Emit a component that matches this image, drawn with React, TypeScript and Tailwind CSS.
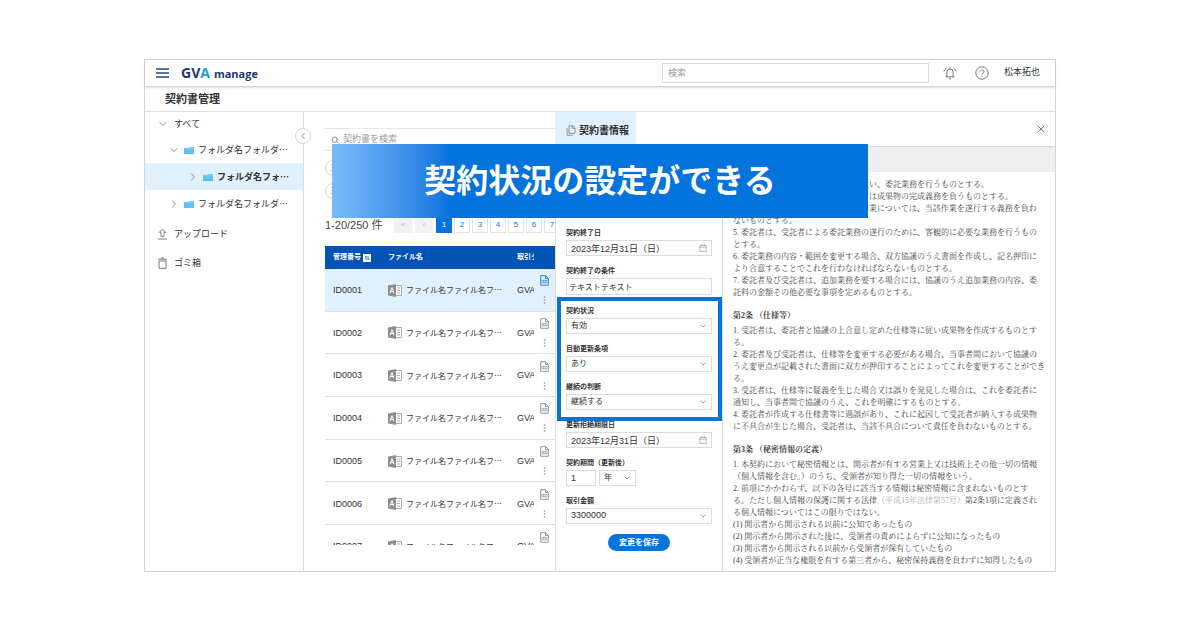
import { ReactNode } from 'react';
import { ChevronDown, ChevronLeft, ChevronRight, Search, X } from 'lucide-react';

const FOLDERS = [
  { name: 'フォルダ名フォルダ…', indent: 'pl-[23px]', open: true, active: false },
  { name: 'フォルダ名フォ…', indent: 'pl-[42px]', open: false, active: true },
  { name: 'フォルダ名フォルダ…', indent: 'pl-[23px]', open: false, active: false },
];

const FILES = ['ID0001', 'ID0002', 'ID0003', 'ID0004', 'ID0005', 'ID0006', 'ID0007'];

const PAGES = [1, 2, 3, 4, 5, 6, 7];

const MenuIcon = () => (
  <svg viewBox="0 0 13 10" className="h-2.5 w-[13px]" fill="none" stroke="#24477d" strokeWidth="1.4">
    <path d="M0 1h13M0 5h13M0 9h13" />
  </svg>
);

const FolderIcon = () => (
  <svg viewBox="0 0 10 8" className="h-2 w-2.5 flex-none" fill="#7accf9">
    <path d="M0 1.800h4.500l1-.8H10V8H0z" />
    <path d="M0 3h10v5H0z" fill="#62c0f6" />
  </svg>
);

const UploadIcon = () => (
  <svg viewBox="0 0 11 12" className="h-3 w-[11px] flex-none" fill="none" stroke="#777" strokeWidth="0.9">
    <path d="M5.5 1 8.7 4.4H7v4.2H4V4.4H2.3z" />
    <path d="M1 11h9" />
  </svg>
);

const TrashIcon = () => (
  <svg viewBox="0 0 11 12" className="h-3 w-[11px] flex-none" fill="none" stroke="#777" strokeWidth="1">
    <path d="M1 2.2h9M3.8 1h3.4M2 4v7.3h7V4z" />
  </svg>
);

const BellIcon = () => (
  <svg viewBox="0 0 14 14" className="h-3.5 w-3.5" fill="none" stroke="#777" strokeWidth="1">
    <path d="M2.4 10.8h9.2M3.9 10.8V6a3.1 3.1 0 0 1 6.2 0v4.8M7 2.8V1.4M6 12.8h2" />
    <path d="M3.4 2C2.2 2.8 1.3 4 .9 5.4M10.6 2c1.2.8 2.1 2 2.5 3.4" />
  </svg>
);

const HelpIcon = () => (
  <svg viewBox="0 0 14 14" className="h-3.5 w-3.5" fill="none" stroke="#777" strokeWidth="1">
    <circle cx="7" cy="7" r="6.2" />
    <path d="M5.2 5.6a1.8 1.8 0 1 1 2.7 1.6c-.6.4-.9.7-.9 1.4M7 9.6v1.1" />
  </svg>
);

const CopyIcon = () => (
  <svg viewBox="0 0 10 11" className="h-[11px] w-2.5 flex-none" fill="none" stroke="#888" strokeWidth="0.9">
    <path d="M3 .8h3.7L9 3v5.3H3z" />
    <path d="M6.4.8v2.5H9M1 3v7.2h5.8" />
  </svg>
);

const CalendarIcon = () => (
  <svg viewBox="0 0 8 8" className="h-2 w-2" fill="none" stroke="#999" strokeWidth="0.7">
    <path d="M.8 1.4h6.4v6H.8zM.8 3.2h6.4M2.5.4v1.600M5.5.4v1.600" />
  </svg>
);

const AccessFileIcon = () => (
  <svg viewBox="0 0 14 13" className="h-[13px] w-3.5 flex-none">
    <path d="M8 1.5h5.5v10H8" fill="#fff" stroke="#999" strokeWidth="0.8" />
    <path d="M9 4h3M9 6.500h3M9 9h3" stroke="#999" strokeWidth="0.8" />
    <path d="M0 1.500 8 0v13l-8-1.500z" fill="#8f8f8f" />
    <path d="M2 9.200 4 3.600l2 5.600M2.800 7.500h2.500" fill="none" stroke="#fff" strokeWidth="1" />
  </svg>
);

const DocIcon = ({ active }: { active: boolean }) => (
  <svg viewBox="0 0 9 11" className={`h-[11px] w-[9px] ${active ? 'text-[#1f78d8]' : 'text-[#8a8a8a]'}`} fill="none" stroke="currentColor" strokeWidth="0.9">
    <path d="M.7.7h5L8.300 3.300v7H.7z" />
    <path d="M5.500.7v2.800h2.800" />
    <path d="M2 5.300h5v2.600H2zM3.700 5.300v2.600M5.300 5.300v2.600" strokeWidth="0.6" />
  </svg>
);

const DotsIcon = () => (
  <svg viewBox="0 0 3 8" className="h-2 w-[3px]" fill="#888">
    <circle cx="1.5" cy="1" r="0.8" />
    <circle cx="1.5" cy="4" r="0.8" />
    <circle cx="1.5" cy="7" r="0.8" />
  </svg>
);

const Header = () => (
  <header className="relative flex h-[27px] items-center border-b border-[#d9d9d9] pr-[15px] pl-[11px] shadow-sm">
    <button aria-label="メニュー">
      <MenuIcon />
    </button>
    <a href="#" className="ml-3 flex items-baseline gap-1 font-['Open_Sans','Noto_Sans',sans-serif] font-bold text-[#1d3a6b]">
      <span className="text-sm leading-5">
        GV<span className="text-[#19a5c4]">A</span>
      </span>
      <span className="text-[11px] leading-5">manage</span>
    </a>
    <input
      aria-label="検索"
      placeholder="検索"
      className="ml-auto h-5 w-[267px] border border-[#dcdcdc] px-[5px] text-[9px] placeholder:text-[#999]"
    />
    <button aria-label="通知" className="ml-3.5">
      <BellIcon />
    </button>
    <button aria-label="ヘルプ" className="ml-[18px]">
      <HelpIcon />
    </button>
    <span className="ml-[15px] text-[9px]">松本拓也</span>
  </header>
);

const Sidebar = () => (
  <nav className="relative border-r border-[#dcdcdc] font-['Noto_Sans_CJK_JP',sans-serif] text-[9px] whitespace-nowrap">
    <button className="flex h-6 w-full items-center gap-[5px] pl-3">
      <ChevronDown size={12} strokeWidth={2} className="text-[#888]" />
      すべて
    </button>
    {FOLDERS.map((folder, i) => (
      <button
        key={i}
        className={`flex h-[27px] w-full items-center ${folder.indent} ${folder.active ? 'bg-[#e1f0fd] font-bold' : ''}`}
      >
        {folder.open ? (
          <ChevronDown size={12} strokeWidth={2} className="mr-1 flex-none text-[#888]" />
        ) : (
          <ChevronRight size={12} strokeWidth={2} className="mr-1 flex-none text-[#888]" />
        )}
        <FolderIcon />
        <span className="ml-1">{folder.name}</span>
      </button>
    ))}
    <button className="mt-0.5 flex h-[29px] w-full items-center gap-1.5 pl-3">
      <UploadIcon />
      アップロード
    </button>
    <button className="flex h-[29px] w-full items-center gap-1.5 pl-3">
      <TrashIcon />
      ゴミ箱
    </button>
    <button
      aria-label="閉じる"
      className="absolute top-4 -right-2 flex size-4 items-center justify-center rounded-full border border-[#d4d4d4] bg-white text-[#777]"
    >
      <ChevronLeft size={10} strokeWidth={2} />
    </button>
  </nav>
);

const FileList = () => (
  <section className="min-w-0 overflow-hidden pt-4 pl-[21px]">
    <label className="flex h-[23px] items-center gap-1 border-y border-[#e8e8e8] pl-1.5">
      <Search size={8} strokeWidth={3} className="flex-none text-[#888]" />
      <input aria-label="契約書を検索" placeholder="契約書を検索" className="w-full min-w-0 text-[9px] placeholder:text-[#999]" />
    </label>
    <div className="mt-[9px] flex flex-col gap-[7px]">
      <span className="flex size-4 items-center rounded-full border border-[#dcdcdc] pl-1 text-[7px] text-[#999]">三</span>
      <span className="flex size-4 items-center rounded-full border border-[#dcdcdc] pl-1 text-[7px] text-[#999]">三</span>
    </div>
    <div className="mt-[18px] flex h-4 items-center text-[8px] whitespace-nowrap text-[#1177dd]">
      <span className="w-[69px] flex-none text-[11px] text-[#444]">1-20/250 件</span>
      <button aria-label="最初のページ" className="mr-[3px] h-4 w-[18px] flex-none bg-[#f2f2f2] text-[#bbb]">
        «
      </button>
      <button aria-label="前のページ" className="mr-[3px] h-4 w-[18px] flex-none bg-[#f2f2f2] text-[#bbb]">
        ‹
      </button>
      {PAGES.map((page) => (
        <button
          key={page}
          className={`mr-0.5 h-4 w-4 flex-none border ${page === 1 ? 'border-[#0573dc] bg-[#0573dc] text-white' : 'border-[#e3e3e3]'}`}
        >
          {page}
        </button>
      ))}
    </div>
    <div className="mt-[13px] h-[299px] overflow-hidden">
      <table className="h-[322px] w-full table-fixed border-collapse text-left whitespace-nowrap">
        <colgroup>
          <col className="w-[63px]" />
          <col />
          <col className="w-[17px]" />
          <col className="w-[21px]" />
        </colgroup>
        <thead className="bg-[#0254b4] text-[7px] text-white">
          <tr className="h-[23px]">
            <th className="p-0 pl-2">
              <span className="flex items-center gap-0.5">
                管理番号
                <span className="flex size-2 items-center justify-center bg-white text-[#0254b4]">
                  <svg viewBox="0 0 8 8" className="size-2" fill="none" stroke="currentColor" strokeWidth="0.8">
                    <path d="M3 6V2L1.800 3.300M5 2v4l1.200-1.300" />
                  </svg>
                </span>
              </span>
            </th>
            <th className="p-0">ファイル名</th>
            <th className="overflow-hidden p-0">取引タイトル</th>
            <th className="p-0" aria-label="操作" />
          </tr>
        </thead>
        <tbody>
          {FILES.map((id, i) => (
            <tr key={id} className={`border-b border-[#e0e0e0] text-[9px] ${i === 0 ? 'bg-[#e1f0fd]' : ''}`}>
              <td className="p-0 pt-0.5 pl-2">{id}</td>
              <td className="p-0 pt-px">
                <span className="flex items-center gap-1 font-['Noto_Sans_CJK_JP',sans-serif] text-[8px]">
                  <AccessFileIcon />
                  ファイル名ファイル名フ…
                </span>
              </td>
              <td className="overflow-hidden p-0 pt-0.5">GVA</td>
              <td className="p-0">
                <span className="flex flex-col items-center gap-2.5">
                  <DocIcon active={i === 0} />
                  <DotsIcon />
                </span>
              </td>
            </tr>
          ))}
        </tbody>
      </table>
    </div>
  </section>
);

interface FieldProps {
  id: string;
  label: string;
  children: ReactNode;
}

const Field = ({ id, label, children }: FieldProps) => (
  <div className="flex flex-col">
    <label htmlFor={id} className="text-[7px] leading-3.5 font-bold whitespace-nowrap">
      {label}
    </label>
    {children}
  </div>
);

const DateInput = ({ id, value }: { id: string; value: string }) => (
  <div className="relative">
    <input id={id} defaultValue={value} className="block h-4 w-full border border-[#dcdcdc] px-1 text-[9px]" />
    <span className="pointer-events-none absolute top-1 right-[5px]">
      <CalendarIcon />
    </span>
  </div>
);

interface SelectProps {
  id: string;
  value: string;
  size?: string;
}

const Select = ({ id, value, size = 'text-[8px]' }: SelectProps) => (
  <div className="relative w-full">
    <select id={id} className={`block h-4 w-full appearance-none border border-[#dcdcdc] bg-white px-1 ${size}`}>
      <option>{value}</option>
    </select>
    <ChevronDown size={8} strokeWidth={3} className="pointer-events-none absolute top-1 right-[5px] text-[#999]" />
  </div>
);

const ContractForm = () => (
  <form className="flex flex-col gap-2 border-r border-[#dcdcdc] px-2.5 pt-4">
    <Field id="start" label="契約開始日">
      <DateInput id="start" value="2023年1月1日（日）" />
    </Field>
    <Field id="end" label="契約終了日">
      <DateInput id="end" value="2023年12月31日（日）" />
    </Field>
    <Field id="condition" label="契約終了の条件">
      <input id="condition" defaultValue="テキストテキスト" className="block h-[17px] border border-[#dcdcdc] px-0.5 text-[8px]" />
    </Field>
    <div className="relative mt-px flex flex-col gap-2">
      <div className="pointer-events-none absolute -top-[7px] -right-2.5 -bottom-[11px] -left-[9px] border-4 border-[#0573dc]" />
      <Field id="status" label="契約状況">
        <Select id="status" value="有効" />
      </Field>
      <Field id="renewal" label="自動更新条項">
        <Select id="renewal" value="あり" />
      </Field>
      <Field id="decision" label="継続の判断">
        <Select id="decision" value="継続する" />
      </Field>
    </div>
    <Field id="refusal" label="更新拒絶期限日">
      <DateInput id="refusal" value="2023年12月31日（日）" />
    </Field>
    <Field id="term" label="契約期間（更新後）">
      <div className="flex gap-[3px]">
        <input id="term" defaultValue="1" className="block h-4 w-[30px] border border-[#dcdcdc] px-1 text-[9px]" />
        <div className="w-[37px]">
          <Select id="unit" value="年" />
        </div>
      </div>
    </Field>
    <Field id="amount" label="取引金額">
      <Select id="amount" value="3300000" size="text-[9px]" />
    </Field>
    <button type="button" className="mt-0.5 h-[17px] w-[62px] self-center rounded-full bg-[#0573dc] text-[8px] font-bold text-white">
      変更を保存
    </button>
  </form>
);

const ContractText = () => (
  <article className="pt-[7px] pr-2 pb-1 pl-2.5 font-['Liberation_Serif','Noto_Serif_CJK_JP','Noto_Sans_CJK_JP',serif] text-[8px] leading-3 whitespace-pre text-[#444]">
    <p>2. 受託者は、本契約及び個別契約に従い、委託業務を行うものとする。</p>
    <p>3. 委託業務を遂行するにあたり受託者は成果物の完成義務を負うものとする。</p>
    <p>{'4. 個別契約に定めのない追加の関連作業については、当該作業を遂行する義務を負わ\nないものとする。'}</p>
    <p>{'5. 委託者は、受託者による委託業務の遂行のために、客観的に必要な業務を行うもの\nとする。'}</p>
    <p>{'6. 委託業務の内容・範囲を変更する場合、双方協議のうえ書面を作成し、記名押印に\nより合意することでこれを行わなければならないものとする。'}</p>
    <p>{'7. 委託者及び受託者は、追加業務を要する場合には、協議のうえ追加業務の内容、委\n託料の金額その他必要な事項を定めるものとする。'}</p>
    <h3 className="mt-[11px] mb-[3px] font-bold">第2条 （仕様等）</h3>
    <p>{'1. 受託者は、委託者と協議の上合意し定めた仕様等に従い成果物を作成するものとす\nる。'}</p>
    <p>{'2. 委託者及び受託者は、仕様等を変更する必要がある場合、当事者間において協議の\nうえ変更点が記載された書面に双方が押印することによってこれを変更することができ\nる。'}</p>
    <p>{'3. 受託者は、仕様等に疑義を生じた場合又は誤りを発見した場合は、これを委託者に\n通知し、当事者間で協議のうえ、これを明確にするものとする。'}</p>
    <p>{'4. 委託者が作成する仕様書等に過誤があり、これに起因して受託者が納入する成果物\nに不具合が生じた場合、受託者は、当該不具合について責任を負わないものとする。'}</p>
    <h3 className="mt-[11px] mb-[3px] font-bold">第3条 （秘密情報の定義）</h3>
    <p>{'1. 本契約において秘密情報とは、開示者が有する営業上又は技術上その他一切の情報\n（個人情報を含む。）のうち、受領者が知り得た一切の情報をいう。'}</p>
    <p>
      {'2. 前項にかかわらず、以下の各号に該当する情報は秘密情報に含まれないものとす\nる。ただし個人情報の保護に関する法律'}
      <span className="text-[#aaa]">（平成15年法律第57号）</span>
      {'第2条1項に定義され\nる個人情報についてはこの限りではない。'}
    </p>
    <p>(1) 開示者から開示される以前に公知であったもの</p>
    <p>(2) 開示者から開示された後に、受領者の責めによらずに公知になったもの</p>
    <p>(3) 開示者から開示される以前から受領者が保有していたもの</p>
    <p>(4) 受領者が正当な権限を有する第三者から、秘密保持義務を負わずに知得したもの</p>
  </article>
);

const App = () => (
  <div lang="ja" className="relative min-h-screen bg-white px-36 py-[59px] font-['Liberation_Sans','Noto_Sans_CJK_JP',sans-serif] text-[#333]">
    <div className="border border-[#d4d4d4]">
      <Header />
      <h1 className="flex h-[25px] items-center border-b border-[#e0e0e0] pl-5 text-[11px] font-bold">契約書管理</h1>
      <main className="grid grid-cols-[159px_251fr_500fr]">
        <Sidebar />
        <FileList />
        <section className="min-w-0 overflow-hidden">
          <div className="flex h-[35px] items-center justify-between border-b border-[#dcdcdc] pr-2">
            <h2 className="flex h-full items-center gap-[3px] bg-[#e1f0fd] pt-0.5 pr-[7px] pl-[11px] text-[10px] font-bold">
              <CopyIcon />
              契約書情報
            </h2>
            <button aria-label="閉じる" className="text-[#777]">
              <X size={12} strokeWidth={2} />
            </button>
          </div>
          <div className="h-[25px] bg-[#eeeff3]" />
          <div className="grid grid-cols-[167px_1fr] border-l border-[#dcdcdc]">
            <ContractForm />
            <ContractText />
          </div>
        </section>
      </main>
    </div>
    <p className="absolute top-36 left-1/2 flex h-[74px] w-[536px] -translate-x-1/2 items-center justify-center bg-linear-to-r from-[#7abcfa] to-[#0573dc] to-[22%] text-[32px] font-bold whitespace-nowrap text-white">
      契約状況の設定ができる
    </p>
  </div>
);

export default App;
